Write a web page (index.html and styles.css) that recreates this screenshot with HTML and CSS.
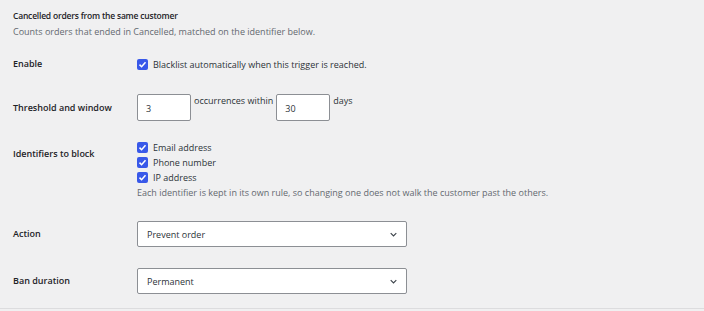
FILE: index.html
```html
<!DOCTYPE html>
<html lang="en">
<head>
    <meta charset="UTF-8">
    <meta name="viewport" content="width=device-width, initial-scale=1.0">
    <title>Blacklist triggers</title>
    <link rel="stylesheet" href="styles.css">
</head>
<body>
    <div class="section">
        <h2 class="section-title">Cancelled orders from the same customer</h2>
        <p class="section-desc">Counts orders that ended in Cancelled, matched on the identifier below.</p>

        <div class="form-row row-enable">
            <div class="row-label">Enable</div>
            <div class="row-field">
                <label class="check">
                    <span class="box"><svg viewBox="0 0 12 12" width="9" height="9"><path d="M2 6.2 L4.8 9 L10 3" fill="none" stroke="#fff" stroke-width="2"/></svg></span>
                    Blacklist automatically when this trigger is reached.
                </label>
            </div>
        </div>

        <div class="form-row row-threshold">
            <div class="row-label">Threshold and window</div>
            <div class="row-field inline">
                <input class="num" type="text" value="3">
                <span class="inline-text">occurrences within</span>
                <input class="num" type="text" value="30">
                <span class="inline-text">days</span>
            </div>
        </div>

        <div class="form-row row-identifiers">
            <div class="row-label">Identifiers to block</div>
            <div class="row-field">
                <label class="check stacked">
                    <span class="box"><svg viewBox="0 0 12 12" width="9" height="9"><path d="M2 6.2 L4.8 9 L10 3" fill="none" stroke="#fff" stroke-width="2"/></svg></span>
                    Email address
                </label>
                <label class="check stacked">
                    <span class="box"><svg viewBox="0 0 12 12" width="9" height="9"><path d="M2 6.2 L4.8 9 L10 3" fill="none" stroke="#fff" stroke-width="2"/></svg></span>
                    Phone number
                </label>
                <label class="check stacked">
                    <span class="box"><svg viewBox="0 0 12 12" width="9" height="9"><path d="M2 6.2 L4.8 9 L10 3" fill="none" stroke="#fff" stroke-width="2"/></svg></span>
                    IP address
                </label>
                <p class="field-desc">Each identifier is kept in its own rule, so changing one does not walk the customer past the others.</p>
            </div>
        </div>

        <div class="form-row row-select">
            <div class="row-label">Action</div>
            <div class="row-field">
                <div class="select">
                    <span>Prevent order</span>
                    <svg viewBox="0 0 10 6" width="7" height="5"><path d="M1 1 L5 5 L9 1" fill="none" stroke="#3c434a" stroke-width="1.6"/></svg>
                </div>
            </div>
        </div>

        <div class="form-row row-select">
            <div class="row-label">Ban duration</div>
            <div class="row-field">
                <div class="select">
                    <span>Permanent</span>
                    <svg viewBox="0 0 10 6" width="7" height="5"><path d="M1 1 L5 5 L9 1" fill="none" stroke="#3c434a" stroke-width="1.6"/></svg>
                </div>
            </div>
        </div>
    </div>
</body>
</html>
```

FILE: styles.css
```css
:root {
    --bg-color: #f0f0f1;
    --text-color: #1d2327;
    --muted: #646970;
    --border: #8c8f94;
    --check-bg: #3858e9;
    --line: #dcdcde;
}

body {
    margin: 0;
    background: var(--bg-color);
    color: var(--text-color);
    font-family: "Open Sans", "Noto Sans", sans-serif;
    font-size: 9px;
}

.section {
    padding: 9px 0 0 13px;
    border-bottom: 1px solid var(--line);
    padding-bottom: 14px;
}

.section-title {
    margin: 0;
    font-size: 8.5px;
    font-weight: 600;
    letter-spacing: -0.2px;
    line-height: 14px;
}

.section-desc {
    margin: 2px 0 0;
    color: var(--muted);
    line-height: 14px;
}

.form-row {
    display: flex;
    align-items: center;
}

.row-label {
    width: 124px;
    flex: none;
    font-weight: 600;
    line-height: 14px;
}

.row-enable {
    margin-top: 15px;
    height: 20px;
}

.row-threshold {
    margin-top: 20px;
}

.row-identifiers {
    margin-top: 19px;
    align-items: flex-start;
}

.row-identifiers .row-label {
    padding-top: 7px;
}

.row-select {
    margin-top: 21px;
}

.check {
    display: flex;
    align-items: center;
    gap: 5px;
    line-height: 15px;
    color: #2c3338;
}

.box {
    width: 11px;
    height: 11px;
    border-radius: 2px;
    background: var(--check-bg);
    display: flex;
    align-items: center;
    justify-content: center;
}

.field-desc {
    margin: 1px 0 0;
    color: var(--muted);
    line-height: 14px;
}

.inline {
    display: flex;
    align-items: flex-start;
}

.num {
    width: 54px;
    height: 27px;
    box-sizing: border-box;
    border: 1px solid var(--border);
    border-radius: 2px;
    background: #fff;
    padding: 2px 8px 0;
    font: inherit;
    color: #2c3338;
}

.inline-text {
    margin: 0 3px;
    line-height: 14px;
    color: #2c3338;
}

.select {
    width: 270px;
    height: 26px;
    box-sizing: border-box;
    border: 1px solid var(--border);
    border-radius: 2px;
    background: #fff;
    display: flex;
    align-items: center;
    justify-content: space-between;
    padding: 0 9px;
    color: #2c3338;
}
```
